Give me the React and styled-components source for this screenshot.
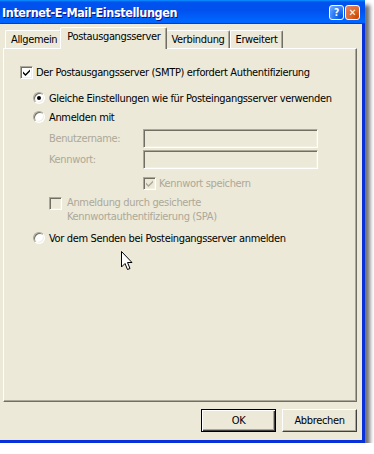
import React from "react";
import styled, { createGlobalStyle } from "styled-components";

const Global = createGlobalStyle`
  html, body { margin: 0; padding: 0; background: #ffffff; }
  body {
    font-family: "DejaVu Sans Condensed", "DejaVu Sans", sans-serif;
    font-stretch: condensed;
    font-size: 11px;
    letter-spacing: -0.35px;
    color: #000;
  }
  * { box-sizing: border-box; }
`;

const Window = styled.div`
  width: 365px;
  height: 443px;
  display: flex;
  flex-direction: column;
  box-shadow: 5px 5px 4px rgba(0, 0, 0, 0.55);
`;

const TitleBar = styled.div`
  height: 24px;
  display: flex;
  align-items: center;
  justify-content: space-between;
  padding: 0 5px 0 2px;
  background: linear-gradient(
    to bottom,
    #0997ff 0%,
    #0053ee 8%,
    #0050ee 40%,
    #0066ff 88%,
    #0066ff 93%,
    #005bff 95%,
    #003dd7 96%,
    #003dd7 100%
  );
`;

const Title = styled.div`
  color: #fff;
  font-weight: bold;
  font-size: 12.5px;
  letter-spacing: -0.4px;
  text-shadow: 1px 1px 0 #0f1089;
`;

const TitleButtons = styled.div`
  display: flex;
  gap: 1px;
  margin-top: 1px;
`;

const CapButton = styled.div`
  width: 15px;
  height: 15px;
  border: 1px solid #fff;
  border-radius: 3px;
  display: flex;
  align-items: center;
  justify-content: center;
  color: #fff;
  font-family: "DejaVu Sans", sans-serif;
  letter-spacing: 0;
  font-weight: bold;
  font-size: 10px;
  background: ${(p) =>
    p.$close
      ? "radial-gradient(circle at 85% 85%, #cc4600 0%, #dc6527 40%, #e5856a 100%)"
      : "radial-gradient(circle at 85% 85%, #0054e3 0%, #2c7bf5 50%, #7ab0ff 100%)"};
`;

const Body = styled.div`
  flex: 1;
  display: flex;
  flex-direction: column;
  background: #ece9d8;
  border-right: 3px solid #0831d9;
  border-bottom: 3px solid #0831d9;
  padding: 3px 5px 8px 3px;
`;

const TabRow = styled.div`
  height: 21px;
  display: flex;
  align-items: flex-end;
  padding-left: 2px;
`;

const Tab = styled.div`
  position: relative;
  z-index: ${(p) => (p.$active ? 2 : 1)};
  height: ${(p) => (p.$active ? "22px" : "18px")};
  margin-bottom: ${(p) => (p.$active ? "-1px" : "0")};
  margin-left: ${(p) => (p.$active ? "-2px" : "0")};
  margin-right: ${(p) => (p.$active ? "-1px" : "0")};
  padding: ${(p) => (p.$active ? "2px 5px 0 6px" : "2px 4px 0 5px")};
  background: #ece9d8;
  border-top: 1px solid #fff;
  border-left: 1px solid #fff;
  border-right: 1px solid #716f64;
  border-top-left-radius: 2px;
  border-top-right-radius: 2px;
  box-shadow: inset -1px 0 0 #aca899;
  white-space: nowrap;
  line-height: 13px;
`;

const Panel = styled.div`
  position: relative;
  height: 354px;
  display: flex;
  flex-direction: column;
  border-top: 1px solid #fff;
  border-left: 1px solid #fff;
  border-right: 1px solid #716f64;
  border-bottom: 1px solid #716f64;
  box-shadow: inset -1px -1px 0 #aca899;
  padding-top: 15px;
`;

const Row = styled.div`
  display: flex;
  align-items: ${(p) => (p.$top ? "flex-start" : "center")};
  height: ${(p) => p.$h || 16}px;
  margin-top: ${(p) => p.$mt || 0}px;
  padding-left: ${(p) => p.$indent || 0}px;
  gap: ${(p) => (p.$gap === undefined ? 3 : p.$gap)}px;
  color: ${(p) => (p.$disabled ? "#aca899" : "#000")};
  white-space: nowrap;
`;

const Box = styled.span`
  flex: none;
  width: 13px;
  height: 13px;
  margin-top: ${(p) => p.$mt || 0}px;
  display: inline-flex;
  align-items: center;
  justify-content: center;
  border: 1px solid;
  border-color: #aca899 #fff #fff #aca899;
  box-shadow: inset 1px 1px 0 #716f64, inset -1px -1px 0 #f1efe2;
  background: ${(p) => (p.$disabled ? "#ece9d8" : "#fff")};
`;

const Radio = styled.span`
  flex: none;
  width: 12px;
  height: 12px;
  border-radius: 50%;
  display: inline-flex;
  align-items: center;
  justify-content: center;
  background: #fff;
  border: 1px solid;
  border-color: #aca899 #fff #fff #aca899;
  box-shadow: inset 1px 1px 0 #716f64, inset -1px -1px 0 #f1efe2;
  margin-right: 1px;
`;

const Dot = styled.span`
  width: 4px;
  height: 4px;
  border-radius: 50%;
  background: #000;
`;

const Label = styled.span`
  width: 94px;
  flex: none;
`;

const Input = styled.div`
  width: 175px;
  height: 19px;
  border: 1px solid;
  border-color: #aca899 #fff #fff #aca899;
  box-shadow: inset 1px 1px 0 #716f64, inset -1px -1px 0 #f1efe2;
  background: #ece9d8;
`;

const Lines = styled.div`
  line-height: 14px;
  padding-left: 2px;
`;

const ButtonRow = styled.div`
  display: flex;
  justify-content: flex-end;
  gap: 6px;
  margin-top: 7px;
`;

const Button = styled.div`
  width: 75px;
  height: 23px;
  display: flex;
  align-items: center;
  justify-content: center;
  background: #ece9d8;
  border: 1px solid;
  border-color: ${(p) => (p.$default ? "#000" : "#fff #404040 #404040 #fff")};
  box-shadow: ${(p) =>
    p.$default
      ? "inset 1px 1px 0 #fff, inset -1px -1px 0 #404040, inset -2px -2px 0 #aca899"
      : "inset -1px -1px 0 #aca899"};
`;

const Cursor = styled.svg`
  position: absolute;
  left: 117px;
  top: 202px;
`;

const Check = ({ color }) => (
  <svg width="9" height="9" viewBox="0 0 9 9">
    <path d="M1 3.5 L3.5 6 L8 1.5 L8 3.5 L3.5 8 L1 5.5 Z" fill={color} />
  </svg>
);

export default function App() {
  return (
    <>
      <Global />
      <Window>
        <TitleBar>
          <Title>Internet-E-Mail-Einstellungen</Title>
          <TitleButtons>
            <CapButton>?</CapButton>
            <CapButton $close>✕</CapButton>
          </TitleButtons>
        </TitleBar>
        <Body>
          <TabRow>
            <Tab>Allgemein</Tab>
            <Tab $active>Postausgangsserver</Tab>
            <Tab>Verbindung</Tab>
            <Tab>Erweitert</Tab>
          </TabRow>
          <Panel>
            <Row $indent={16}>
              <Box>
                <Check color="#000" />
              </Box>
              <span>Der Postausgangsserver (SMTP) erfordert Authentifizierung</span>
            </Row>
            <Row $indent={29} $mt={10}>
              <Radio>
                <Dot />
              </Radio>
              <span>Gleiche Einstellungen wie für Posteingangsserver verwenden</span>
            </Row>
            <Row $indent={29} $mt={3}>
              <Radio />
              <span>Anmelden mit</span>
            </Row>
            <Row $indent={45} $mt={4} $h={19} $gap={0} $disabled>
              <Label>Benutzername:</Label>
              <Input />
            </Row>
            <Row $indent={45} $mt={2} $h={19} $gap={0} $disabled>
              <Label>Kennwort:</Label>
              <Input />
            </Row>
            <Row $indent={139} $mt={6} $disabled>
              <Box $disabled>
                <Check color="#aca899" />
              </Box>
              <span>Kennwort speichern</span>
            </Row>
            <Row $indent={45} $mt={5} $h={28} $top $disabled>
              <Box $disabled $mt={1} />
              <Lines>
                Anmeldung durch gesicherte
                <br />
                Kennwortauthentifizierung (SPA)
              </Lines>
            </Row>
            <Row $indent={29} $mt={6}>
              <Radio />
              <span>Vor dem Senden bei Posteingangsserver anmelden</span>
            </Row>
            <Cursor width="12" height="20" viewBox="0 0 12 20">
              <path
                d="M0.5 0.5 L0.5 16 L4 12.5 L6.5 18.5 L9 17.5 L6.5 11.5 L11 11.5 Z"
                fill="#fff"
                stroke="#000"
                strokeWidth="1"
              />
            </Cursor>
          </Panel>
          <ButtonRow>
            <Button $default>OK</Button>
            <Button>Abbrechen</Button>
          </ButtonRow>
        </Body>
      </Window>
    </>
  );
}
